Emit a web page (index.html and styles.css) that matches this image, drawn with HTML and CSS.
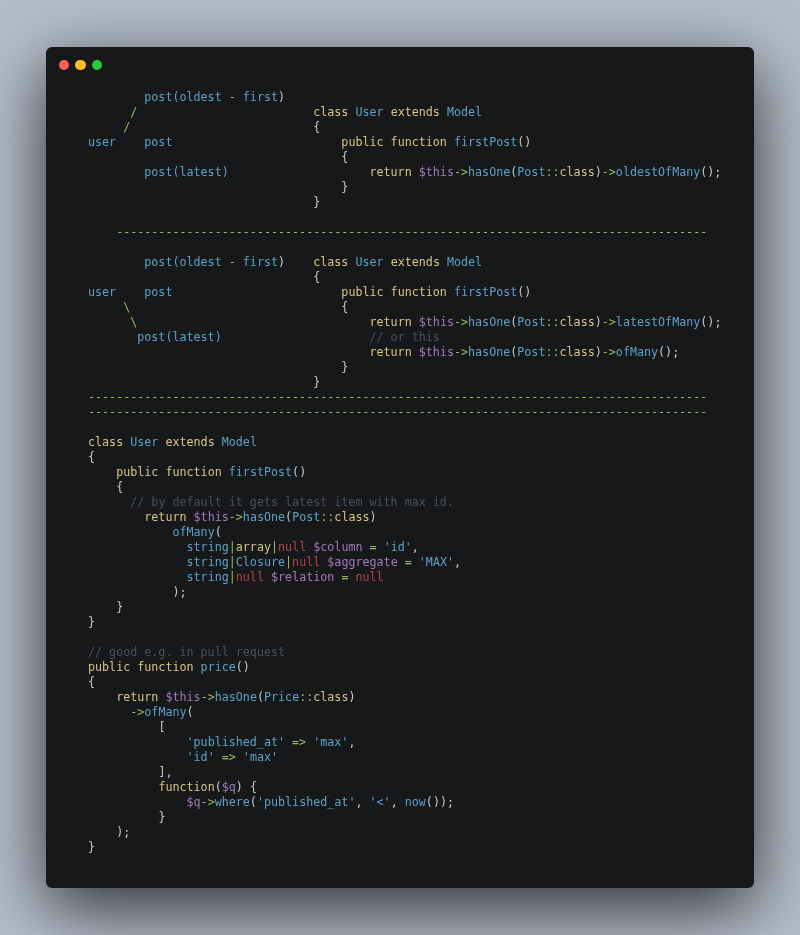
FILE: index.html
```html
<!DOCTYPE html>
<html lang="en">
<head>
<meta charset="utf-8">
<title>Code</title>
<link rel="stylesheet" href="styles.css">
</head>
<body>
<main class="window">
<div class="dots"><span class="dot red"></span><span class="dot yellow"></span><span class="dot green"></span></div>
<pre class="code"><span class="f">        post(oldest </span><span class="o">-</span><span class="f"> first</span><span class="p">)</span>
<span class="o">      /</span>                         <span class="k">class</span> <span class="f">User</span> <span class="k">extends</span> <span class="f">Model</span>
<span class="o">     /</span>                          <span class="p">{</span>
<span class="f">user    post</span>                        <span class="k">public function</span> <span class="f">firstPost</span><span class="p">()</span>
                                    <span class="p">{</span>
<span class="f">        post(latest)</span>                    <span class="k">return</span> <span class="v">$this</span><span class="o">-&gt;</span><span class="f">hasOne</span><span class="p">(</span><span class="f">Post</span><span class="o">::</span><span class="k">class</span><span class="p">)</span><span class="o">-&gt;</span><span class="f">oldestOfMany</span><span class="p">();</span>
                                    <span class="p">}</span>
                                <span class="p">}</span>

<span class="o">    ------------------------------------------------------------------------------------</span>

<span class="f">        post(oldest </span><span class="o">-</span><span class="f"> first</span><span class="p">)</span>    <span class="k">class</span> <span class="f">User</span> <span class="k">extends</span> <span class="f">Model</span>
                                <span class="p">{</span>
<span class="f">user    post</span>                        <span class="k">public function</span> <span class="f">firstPost</span><span class="p">()</span>
<span class="o">     \</span>                              <span class="p">{</span>
<span class="o">      \</span>                                 <span class="k">return</span> <span class="v">$this</span><span class="o">-&gt;</span><span class="f">hasOne</span><span class="p">(</span><span class="f">Post</span><span class="o">::</span><span class="k">class</span><span class="p">)</span><span class="o">-&gt;</span><span class="f">latestOfMany</span><span class="p">();</span>
<span class="f">       post(latest)</span>                     <span class="c">// or this</span>
                                        <span class="k">return</span> <span class="v">$this</span><span class="o">-&gt;</span><span class="f">hasOne</span><span class="p">(</span><span class="f">Post</span><span class="o">::</span><span class="k">class</span><span class="p">)</span><span class="o">-&gt;</span><span class="f">ofMany</span><span class="p">();</span>
                                    <span class="p">}</span>
                                <span class="p">}</span>
<span class="o">----------------------------------------------------------------------------------------</span>
<span class="o">----------------------------------------------------------------------------------------</span>

<span class="k">class</span> <span class="f">User</span> <span class="k">extends</span> <span class="f">Model</span>
<span class="p">{</span>
    <span class="k">public function</span> <span class="f">firstPost</span><span class="p">()</span>
    <span class="p">{</span>
      <span class="c">// by default it gets latest item with max id.</span>
        <span class="k">return</span> <span class="v">$this</span><span class="o">-&gt;</span><span class="f">hasOne</span><span class="p">(</span><span class="f">Post</span><span class="o">::</span><span class="k">class</span><span class="p">)</span>
            <span class="f">ofMany</span><span class="p">(</span>
              <span class="f">string</span><span class="o">|</span><span class="k">array</span><span class="o">|</span><span class="n">null</span> <span class="v">$column</span> <span class="o">=</span> <span class="f">'id'</span><span class="p">,</span>
              <span class="f">string</span><span class="o">|</span><span class="f">Closure</span><span class="o">|</span><span class="n">null</span> <span class="v">$aggregate</span> <span class="o">=</span> <span class="f">'MAX'</span><span class="p">,</span>
              <span class="f">string</span><span class="o">|</span><span class="n">null</span> <span class="v">$relation</span> <span class="o">=</span> <span class="n">null</span>
            <span class="p">);</span>
    <span class="p">}</span>
<span class="p">}</span>

<span class="c">// good e.g. in pull request</span>
<span class="k">public function</span> <span class="f">price</span><span class="p">()</span>
<span class="p">{</span>
    <span class="k">return</span> <span class="v">$this</span><span class="o">-&gt;</span><span class="f">hasOne</span><span class="p">(</span><span class="f">Price</span><span class="o">::</span><span class="k">class</span><span class="p">)</span>
      <span class="o">-&gt;</span><span class="f">ofMany</span><span class="p">(</span>
          <span class="p">[</span>
              <span class="f">'published_at'</span> <span class="o">=&gt;</span> <span class="f">'max'</span><span class="p">,</span>
              <span class="f">'id'</span> <span class="o">=&gt;</span> <span class="f">'max'</span>
          <span class="p">],</span>
          <span class="k">function</span><span class="p">(</span><span class="v">$q</span><span class="p">)</span> <span class="p">{</span>
              <span class="v">$q</span><span class="o">-&gt;</span><span class="f">where</span><span class="p">(</span><span class="f">'published_at'</span><span class="p">,</span> <span class="f">'&lt;'</span><span class="p">,</span> <span class="f">now</span><span class="p">());</span>
          <span class="p">}</span>
    <span class="p">);</span>
<span class="p">}</span></pre>
</main>
</body>
</html>
```
FILE: styles.css
```css
html, body {
  margin: 0;
  height: 100%;
}
body {
  box-sizing: border-box;
  padding: 47px 46px 47px;
  background: #b1bec9;
  overflow: hidden;
}
.window {
  box-sizing: border-box;
  width: 708px;
  height: 841px;
  padding: 12.5px 0 0 42px;
  background: #16181a;
  border-radius: 6px;
  box-shadow: 0 20px 68px rgba(0, 0, 0, 0.74);
}
.dots {
  display: flex;
  align-items: center;
  gap: 6px;
  margin-left: -29.3px;
  height: 11px;
}
.dot {
  width: 10.6px;
  height: 10.6px;
  border-radius: 50%;
}
.red { background: #ff5f56; }
.yellow { background: #ffbd2e; }
.green { background: #27c93f; }
.code {
  margin: 19.5px 0 0;
  font-family: "DejaVu Sans Mono", monospace;
  font-size: 11.69px;
  line-height: 15px;
  color: #c8cbc8;
  filter: blur(0.4px);
}
.k { color: #d9c582; }
.f { color: #5ca2c8; }
.o { color: #9dbb5f; }
.p { color: #c8cbc8; }
.v { color: #a379bb; }
.n { color: #b9424d; }
.c { color: #4a5259; }
```
